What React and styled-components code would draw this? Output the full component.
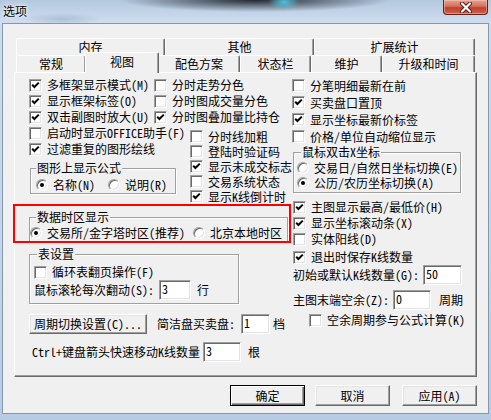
import React from 'react';
import styled, { createGlobalStyle, css } from 'styled-components';

const GlobalStyle = createGlobalStyle`
  html, body {
    margin: 0;
    padding: 0;
  }
  body {
    width: 491px;
    height: 420px;
    overflow: hidden;
    font-family: "Noto Sans Mono CJK SC", "Noto Sans CJK SC", sans-serif;
    font-size: 12px;
    line-height: 14px;
    color: #000;
  }
`;

const backTabs = [
  { label: '内存', w: 149 },
  { label: '其他', w: 149 },
  { label: '扩展统计', w: 161 },
];

const frontTabs = [
  { label: '常规', w: 70 },
  { label: '视图', w: 72, selected: true },
  { label: '配色方案', w: 82 },
  { label: '状态栏', w: 71 },
  { label: '维护', w: 71 },
  { label: '升级和时间', w: 93 },
];

function CheckMark() {
  return (
    <svg width="9" height="9" viewBox="0 0 9 9">
      <path d="M1.2 3.8 L3.4 6 L7.8 1.6" fill="none" stroke="#000" strokeWidth="2" />
    </svg>
  );
}

function Check({ checked, children, ...rest }) {
  return (
    <CheckRow {...rest}>
      <CheckBox>{checked && <CheckMark />}</CheckBox>
      <span>{children}</span>
    </CheckRow>
  );
}

function Radio({ checked, children, $ml }) {
  return (
    <RadioItem $ml={$ml}>
      <RadioCircle $on={checked} />
      <span>{children}</span>
    </RadioItem>
  );
}

export default function App() {
  return (
    <>
      <GlobalStyle />
      <Window>
        <TitleBar>
          <TitleText>选项</TitleText>
          <CloseButton>
            <svg width="14" height="11" viewBox="0 0 14 11">
              <path d="M3 1.5 L11 9.5 M11 1.5 L3 9.5" stroke="#5a1a10" strokeWidth="4" strokeLinecap="round" />
              <path d="M3 1.5 L11 9.5 M11 1.5 L3 9.5" stroke="#fff" strokeWidth="2.2" strokeLinecap="round" />
            </svg>
          </CloseButton>
        </TitleBar>

        <Client>
          <TabControl>
            <TabStrip>
              <TabRow>
                {backTabs.map((t) => (
                  <Tab key={t.label} $w={t.w}>{t.label}</Tab>
                ))}
              </TabRow>
              <TabRow>
                {frontTabs.map((t) => (
                  <Tab key={t.label} $w={t.w} $selected={t.selected}>{t.label}</Tab>
                ))}
              </TabRow>
            </TabStrip>

            <Panel>
              <LeftArea>
                <TopSplit>
                  <Column $w={125}>
                    <Check checked>多框架显示模式(M)</Check>
                    <Check checked>显示框架标签(O)</Check>
                    <Check checked>双击副图时放大(U)</Check>
                    <Check>启动时显示OFFICE助手(F)</Check>
                    <Check checked>过滤重复的图形绘线</Check>
                    <Group $w={146} $ml={1} $mt={5} $pad="4px 0 1px 5px">
                      <GroupTitle $ml={0}>图形上显示公式</GroupTitle>
                      <RadioRow>
                        <Radio checked>名称(N)</Radio>
                        <Radio $ml={13}>说明(R)</Radio>
                      </RadioRow>
                    </Group>
                  </Column>
                  <Column>
                    <Check>分时走势分色</Check>
                    <Check>分时图成交量分色</Check>
                    <Check checked>分时图叠加量比持仓</Check>
                    <Check $ml={36} $h={15} $mt={4}>分时线加粗</Check>
                    <Check $ml={36} $h={15}>登陆时验证码</Check>
                    <Check $ml={36} $h={15} checked>显示未成交标志</Check>
                    <Check $ml={36} $h={15}>交易系统状态</Check>
                    <Check $ml={36} $h={15} checked>显示K线倒计时</Check>
                  </Column>
                </TopSplit>

                <Group $w={259} $mt={7} $pad="3px 0 1px 0">
                  <GroupTitle $ml={6}>数据时区显示</GroupTitle>
                  <RadioRow>
                    <Radio checked>交易所/金字塔时区(推荐)</Radio>
                    <Radio $ml={8}>北京本地时区</Radio>
                  </RadioRow>
                </Group>

                <Group $w={210} $mt={6} $pad="5px 0 3px 4px">
                  <GroupTitle $ml={3}>表设置</GroupTitle>
                  <Check $h={14}>循环表翻页操作(F)</Check>
                  <FieldRow $mt={1}>
                    <span>鼠标滚轮每次翻动(S):</span>
                    <TextBox $w={32} $ml={5} defaultValue="3" readOnly />
                    <Unit $ml={6}>行</Unit>
                  </FieldRow>
                </Group>

                <FieldRow $mt={10}>
                  <PushButton $w={118} $h={20}>周期切换设置(C)...</PushButton>
                  <Unit $ml={10}>简洁盘买卖盘:</Unit>
                  <TextBox $w={29} $ml={6} defaultValue="1" readOnly />
                  <Unit $ml={3}>档</Unit>
                </FieldRow>

                <FieldRow $mt={8} $ml={3}>
                  <span>Ctrl+键盘箭头快速移动K线数量</span>
                  <TextBox $w={38} $ml={3} defaultValue="3" readOnly />
                  <Unit $ml={7}>根</Unit>
                </FieldRow>
              </LeftArea>

              <RightArea>
                <Check $h={17}>分笔明细最新在前</Check>
                <Check $h={17} checked>买卖盘口置顶</Check>
                <Check $h={17} checked>显示坐标最新价标签</Check>
                <Check $h={17}>价格/单位自动缩位显示</Check>

                <Group $w={168} $ml={1} $mt={1} $pad="2px 0 2px 3px">
                  <GroupTitle $ml={4}>鼠标双击X坐标</GroupTitle>
                  <RadioRow $h={15}>
                    <Radio>交易日/自然日坐标切换(E)</Radio>
                  </RadioRow>
                  <RadioRow $h={15}>
                    <Radio checked>公历/农历坐标切换(A)</Radio>
                  </RadioRow>
                </Group>

                <Check $ml={1} $mt={6} checked>主图显示最高/最低价(H)</Check>
                <Check $ml={1} checked>显示坐标滚动条(X)</Check>
                <Check $ml={1}>实体阳线(D)</Check>
                <Check $ml={1} $mt={2} checked>退出时保存K线数量</Check>

                <FieldRow $ml={1}>
                  <span>初始或默认K线数量(G):</span>
                  <TextBox $w={39} $ml={4} defaultValue="50" readOnly />
                </FieldRow>
                <FieldRow $ml={1} $mt={5}>
                  <span>主图末端空余(Z):</span>
                  <TextBox $w={38} $ml={4} defaultValue="0" readOnly />
                  <Unit $ml={8}>周期</Unit>
                </FieldRow>
                <Check $ml={17} $mt={3} $h={14}>空余周期参与公式计算(K)</Check>
              </RightArea>
            </Panel>
          </TabControl>

          <ButtonBar>
            <PushButton $w={75} $default>确定</PushButton>
            <PushButton $w={75} $ml={10}>取消</PushButton>
            <PushButton $w={75} $ml={12}>应用(A)</PushButton>
          </ButtonBar>

          <Highlight />
        </Client>
      </Window>
    </>
  );
}

const Window = styled.div`
  width: 491px;
  height: 420px;
  box-sizing: border-box;
  padding: 0 2px 6px;
  display: flex;
  flex-direction: column;
  background:
    radial-gradient(16px 8px at 284px 2px, rgba(80, 205, 235, 0.9), rgba(80, 205, 235, 0)),
    radial-gradient(135px 12px at 255px 0, rgba(22, 26, 34, 0.92), rgba(22, 26, 34, 0)),
    radial-gradient(40px 6px at 62px 19px, rgba(140, 160, 185, 0.45), rgba(140, 160, 185, 0)),
    linear-gradient(180deg, #b3c8df 0, #cddcee 21px, #c2d5ea 60%, #b7cce4 100%);
`;

const TitleBar = styled.div`
  height: 23px;
  flex: none;
  display: flex;
  justify-content: space-between;
  align-items: flex-start;
`;

const TitleText = styled.div`
  padding: 4px 0 0 1px;
  font-size: 12px;
  line-height: 14px;
  text-shadow: 0 0 6px #fff, 0 0 3px #fff;
`;

const CloseButton = styled.div`
  width: 45px;
  height: 15px;
  margin-right: 1px;
  box-sizing: border-box;
  border: 1px solid #5e2218;
  border-top: none;
  border-radius: 0 0 4px 4px;
  background: linear-gradient(180deg, #e7a393 0, #d3705d 45%, #c0402a 55%, #d0614a 100%);
  box-shadow: inset 0 0 0 1px rgba(255, 210, 200, 0.45);
  display: flex;
  align-items: center;
  justify-content: center;
`;

const Client = styled.div`
  position: relative;
  flex: 1;
  background: #f0f0f0;
  border: 1px solid #8497ad;
  padding: 14px 0 0 11px;
`;

const TabControl = styled.div`
  width: 463px;
`;

const TabStrip = styled.div`
  padding-left: 2px;
`;

const TabRow = styled.div`
  display: flex;
  height: 17px;
`;

const Tab = styled.div`
  flex: none;
  width: ${(p) => p.$w}px;
  height: 100%;
  box-sizing: border-box;
  border: 1px solid;
  border-bottom: none;
  border-color: #fff #696969 transparent #fff;
  border-radius: 2px 2px 0 0;
  box-shadow: inset -1px 0 #a0a0a0;
  background: #f0f0f0;
  display: flex;
  align-items: center;
  justify-content: center;
  white-space: nowrap;

  ${(p) =>
    p.$selected &&
    css`
      position: relative;
      z-index: 1;
      width: ${p.$w + 2}px;
      height: 21px;
      margin: -3px -1px 0;
      padding-bottom: 3px;
    `}
`;

const Panel = styled.div`
  height: 305px;
  box-sizing: border-box;
  border: 1px solid;
  border-color: #fff #696969 #696969 #fff;
  box-shadow: inset -1px -1px #a0a0a0;
  display: flex;
  padding: 4px 0 0 14px;
`;

const LeftArea = styled.div`
  width: 263px;
  flex: none;
  display: flex;
  flex-direction: column;
`;

const TopSplit = styled.div`
  display: flex;
  align-items: flex-start;
`;

const Column = styled.div`
  display: flex;
  flex-direction: column;
  ${(p) => (p.$w ? `width: ${p.$w}px; flex: none;` : 'flex: 1;')}
`;

const RightArea = styled.div`
  flex: 1;
  display: flex;
  flex-direction: column;
`;

const CheckRow = styled.div`
  display: flex;
  align-items: center;
  gap: 5px;
  height: ${(p) => p.$h || 16}px;
  margin-top: ${(p) => p.$mt || 0}px;
  margin-left: ${(p) => p.$ml || 0}px;
  white-space: nowrap;
`;

const CheckBox = styled.span`
  flex: none;
  width: 13px;
  height: 13px;
  box-sizing: border-box;
  background: #fff;
  border: 1px solid;
  border-color: #a0a0a0 #fff #fff #a0a0a0;
  box-shadow: inset 1px 1px #696969, inset -1px -1px #e3e3e3;
  display: flex;
  align-items: center;
  justify-content: center;
`;

const RadioRow = styled.div`
  display: flex;
  align-items: center;
  height: ${(p) => p.$h || 14}px;
  white-space: nowrap;
`;

const RadioItem = styled.div`
  display: flex;
  align-items: center;
  gap: 5px;
  margin-left: ${(p) => p.$ml || 0}px;
`;

const RadioCircle = styled.span`
  flex: none;
  width: 12px;
  height: 12px;
  box-sizing: border-box;
  border-radius: 50%;
  background: #fff;
  border: 1px solid;
  border-color: #a0a0a0 #fff #fff #a0a0a0;
  box-shadow: inset 1px 1px #696969, inset -1px -1px #e3e3e3;
  display: flex;
  align-items: center;
  justify-content: center;

  &::after {
    content: '';
    display: ${(p) => (p.$on ? 'block' : 'none')};
    width: 4px;
    height: 4px;
    border-radius: 50%;
    background: #000;
  }
`;

const Group = styled.fieldset`
  width: ${(p) => p.$w}px;
  min-width: 0;
  box-sizing: border-box;
  margin: ${(p) => p.$mt || 0}px 0 0 ${(p) => p.$ml || 0}px;
  padding: ${(p) => p.$pad || '0'};
  border: 1px solid #a0a0a0;
  box-shadow: inset 1px 1px #fff, 1px 1px #fff;
`;

const GroupTitle = styled.legend`
  margin-left: ${(p) => p.$ml || 0}px;
  padding: 0 1px;
  line-height: 12px;
  background: #f0f0f0;
  white-space: nowrap;
`;

const FieldRow = styled.div`
  display: flex;
  align-items: center;
  height: 20px;
  margin-top: ${(p) => p.$mt || 0}px;
  margin-left: ${(p) => p.$ml || 0}px;
  white-space: nowrap;
`;

const Unit = styled.span`
  margin-left: ${(p) => p.$ml || 0}px;
`;

const TextBox = styled.input`
  flex: none;
  width: ${(p) => p.$w}px;
  height: 20px;
  margin: 0 0 0 ${(p) => p.$ml || 0}px;
  box-sizing: border-box;
  padding: 0 2px 3px;
  font: inherit;
  color: #000;
  background: #fff;
  border: 1px solid;
  border-color: #a0a0a0 #fff #fff #a0a0a0;
  box-shadow: inset 1px 1px #696969, inset -1px -1px #e3e3e3;
  outline: none;
`;

const PushButton = styled.button`
  flex: none;
  width: ${(p) => p.$w}px;
  height: ${(p) => p.$h || 21}px;
  margin: 0 0 0 ${(p) => p.$ml || 0}px;
  box-sizing: border-box;
  padding: 0;
  font: inherit;
  color: #000;
  background: #f0f0f0;
  border: 1px solid;
  border-color: #fff #696969 #696969 #fff;
  box-shadow: inset -1px -1px #a0a0a0, inset 1px 1px #e3e3e3;
  white-space: nowrap;

  ${(p) =>
    p.$default &&
    css`
      border-color: #000;
      box-shadow: inset 1px 1px #fff, inset -1px -1px #696969, inset -2px -2px #a0a0a0;
    `}
`;

const ButtonBar = styled.div`
  width: 463px;
  margin-top: 8px;
  display: flex;
  justify-content: flex-end;
`;

const Highlight = styled.div`
  position: absolute;
  left: 10px;
  top: 180px;
  width: 278px;
  height: 39px;
  box-sizing: border-box;
  border: 2px solid #ff0000;
  pointer-events: none;
`;
